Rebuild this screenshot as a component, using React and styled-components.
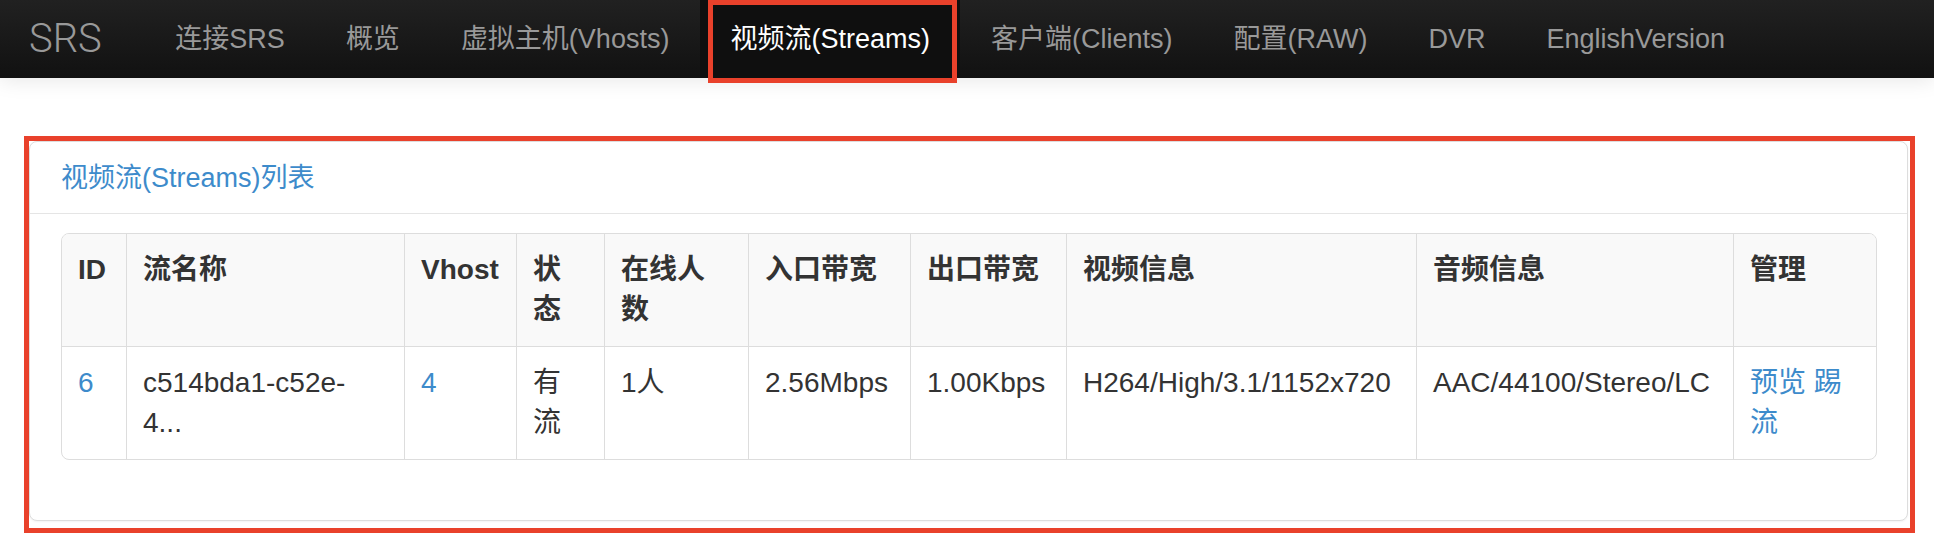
import React from "react";
import styled, { createGlobalStyle } from "styled-components";

const GlobalStyle = createGlobalStyle`
  html, body {
    margin: 0;
    padding: 0;
    background: #ffffff;
  }

  body {
    font-family: "Liberation Sans", "Noto Sans CJK SC", sans-serif;
    font-size: 28px;
    line-height: 40px;
    color: #333333;
  }
`;

const Navbar = styled.nav`
  position: relative;
  z-index: 1;
  display: flex;

  height: 78px;

  background: linear-gradient(#212121, #111111);
  box-shadow: 0 2px 20px rgba(0, 0, 0, 0.1);
`;

const Brand = styled.a`
  display: flex;
  align-items: center;

  padding: 0 43px 0 29px;

  font-family: Roboto, "Liberation Sans", sans-serif;
  font-weight: 300;
  font-size: 40px;
  color: #999999;
  text-decoration: none;
`;

const NavList = styled.ul`
  display: flex;

  margin: 0;
  padding: 0;
  list-style: none;
`;

const NavLink = styled.a`
  position: relative;
  display: flex;
  align-items: center;

  height: 100%;
  padding: 0 30.5px;

  font-size: 27px;
  color: ${(p) => (p.$active ? "#ffffff" : "#999999")};
  background: ${(p) => (p.$active ? "#0f0f0f" : "transparent")};
  text-decoration: none;

  &::after {
    content: "";
    display: ${(p) => (p.$active ? "block" : "none")};
    position: absolute;
    top: 0;
    left: 8px;
    right: 3px;
    bottom: -5px;
    border: 5px solid #e9412b;
  }
`;

const Main = styled.main`
  padding: 58px 19px 0 24px;
`;

const Highlight = styled.div`
  padding: 0 2px 7px 0;
  border: 5px solid #e9412b;
`;

const Panel = styled.section`
  background: #ffffff;
  border: 1px solid #dddddd;
  border-radius: 8px;
  box-shadow: 0 1px 2px rgba(0, 0, 0, 0.05);
`;

const PanelHeading = styled.div`
  padding: 16px 31px 15px;
  border-bottom: 1px solid #e5e5e5;

  font-size: 27px;
  color: #3d8bcb;
`;

const PanelBody = styled.div`
  padding: 19px 31px 20px;
`;

const Table = styled.table`
  width: 100%;
  margin-bottom: 40px;

  table-layout: fixed;
  border-collapse: separate;
  border-spacing: 0;
  border: 1px solid #dddddd;
  border-radius: 8px;
`;

const Th = styled.th`
  padding: 16px;
  vertical-align: top;
  text-align: left;
  font-weight: bold;
  background: #f9f9f9;

  & + & {
    border-left: 1px solid #dddddd;
  }

  &:first-child {
    border-top-left-radius: 7px;
  }

  &:last-child {
    border-top-right-radius: 7px;
  }
`;

const Td = styled.td`
  padding: 16px;
  vertical-align: top;
  border-top: 1px solid #dddddd;

  & + & {
    border-left: 1px solid #dddddd;
  }
`;

const Link = styled.a`
  color: #3d8bcb;
  text-decoration: none;
`;

const menu = [
  "连接SRS",
  "概览",
  "虚拟主机(Vhosts)",
  "视频流(Streams)",
  "客户端(Clients)",
  "配置(RAW)",
  "DVR",
  "EnglishVersion",
];

const columns = [
  ["ID", 64],
  ["流名称", 278],
  ["Vhost", 112],
  ["状态", 88],
  ["在线人数", 144],
  ["入口带宽", 162],
  ["出口带宽", 156],
  ["视频信息", 350],
  ["音频信息", 317],
  ["管理", 143],
];

export default function App() {
  return (
    <>
      <GlobalStyle />
      <Navbar>
        <Brand href="#">SRS</Brand>
        <NavList>
          {menu.map((item) => (
            <li key={item}>
              <NavLink href="#" $active={item === "视频流(Streams)"}>
                {item}
              </NavLink>
            </li>
          ))}
        </NavList>
      </Navbar>

      <Main>
        <Highlight>
          <Panel>
            <PanelHeading>视频流(Streams)列表</PanelHeading>
            <PanelBody>
              <Table>
                <colgroup>
                  {columns.map(([name, w]) => (
                    <col key={name} style={{ width: w }} />
                  ))}
                </colgroup>
                <thead>
                  <tr>
                    {columns.map(([name]) => (
                      <Th key={name}>{name}</Th>
                    ))}
                  </tr>
                </thead>
                <tbody>
                  <tr>
                    <Td>
                      <Link href="#">6</Link>
                    </Td>
                    <Td>
                      c514bda1-c52e-
                      <br />
                      4...
                    </Td>
                    <Td>
                      <Link href="#">4</Link>
                    </Td>
                    <Td>有流</Td>
                    <Td>1人</Td>
                    <Td>2.56Mbps</Td>
                    <Td>1.00Kbps</Td>
                    <Td>H264/High/3.1/1152x720</Td>
                    <Td>AAC/44100/Stereo/LC</Td>
                    <Td>
                      <Link href="#">预览</Link> <Link href="#">踢流</Link>
                    </Td>
                  </tr>
                </tbody>
              </Table>
            </PanelBody>
          </Panel>
        </Highlight>
      </Main>
    </>
  );
}
